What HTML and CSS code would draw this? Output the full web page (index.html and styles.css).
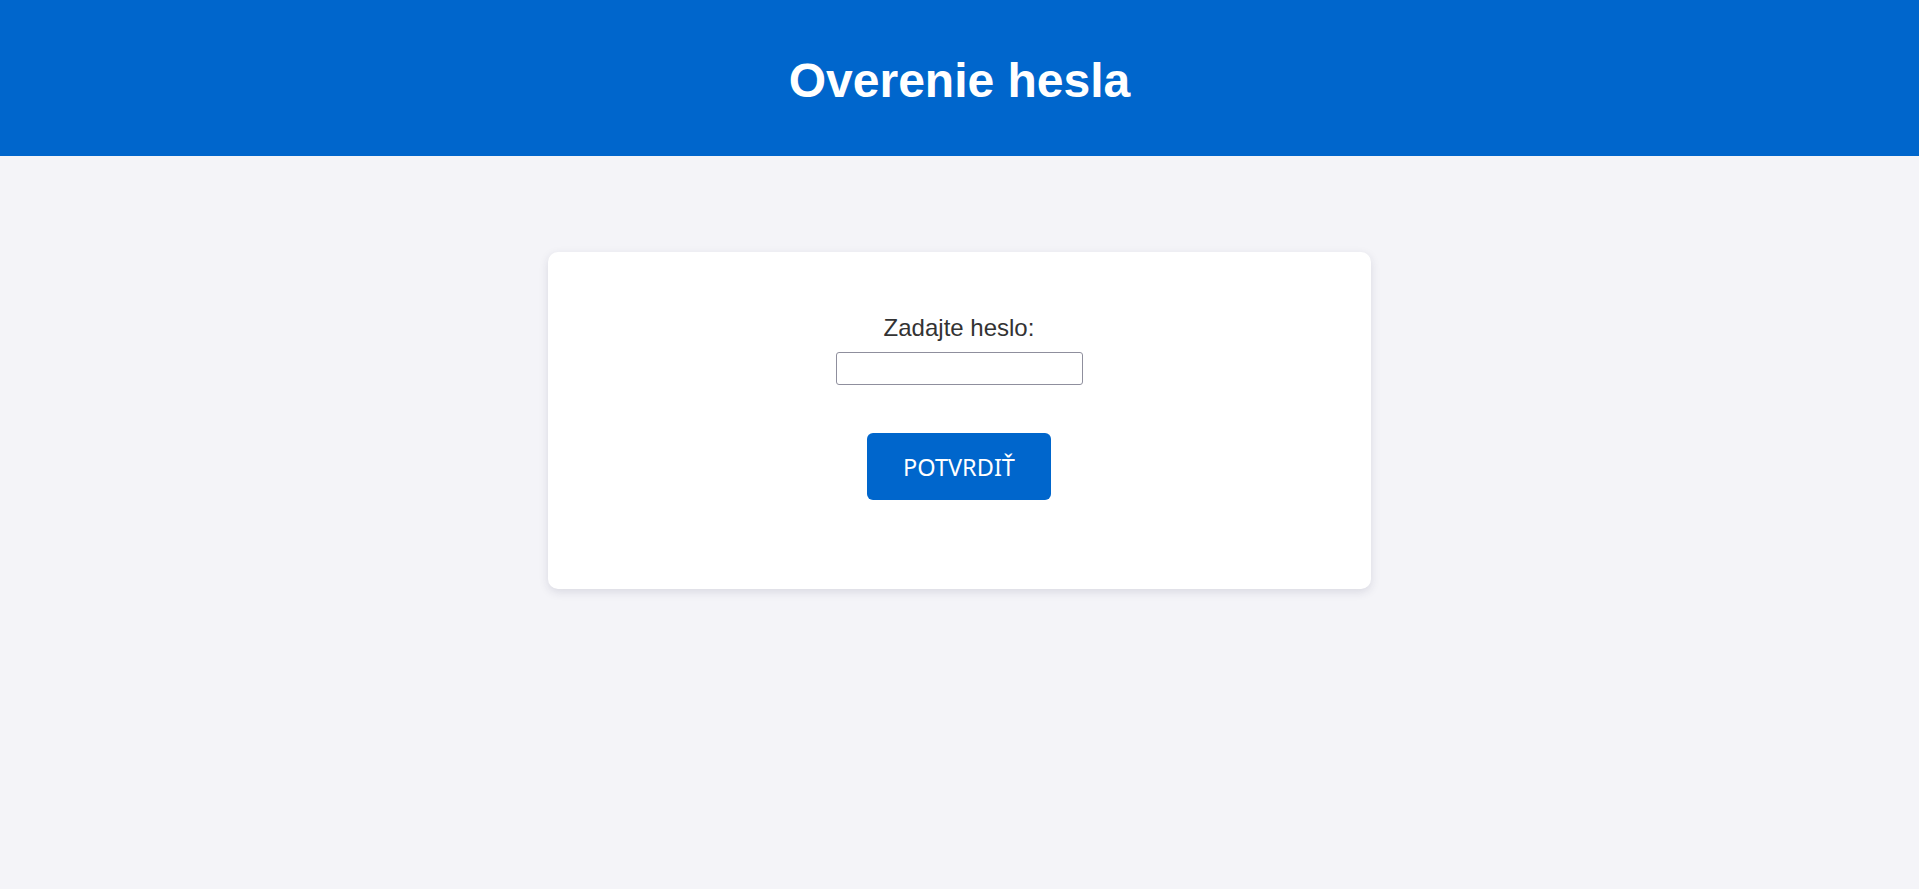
FILE: index.html
```html
<!DOCTYPE html>
<html lang="sk">
<head>
<meta charset="utf-8">
<title>Overenie hesla</title>
<link rel="stylesheet" href="styles.css">
</head>
<body>
<header class="site-header">
  <h1 class="site-title">Overenie hesla</h1>
</header>
<main class="page">
  <form class="card" onsubmit="return false;">
    <label class="field-label" for="heslo">Zadajte heslo:</label>
    <input class="field-input" type="password" id="heslo" name="heslo">
    <button class="submit-btn" type="submit">POTVRDIŤ</button>
  </form>
</main>
</body>
</html>
```
FILE: styles.css
```css
* { box-sizing: border-box; }

html, body {
  margin: 0;
  padding: 0;
}

body {
  background: #f4f4f8;
  font-family: "Liberation Sans", Arial, sans-serif;
  color: #333333;
  min-height: 889px;
}

.site-header {
  background: #0066cc;
  height: 156px;
  display: flex;
  align-items: center;
  justify-content: center;
}

.site-title {
  margin: 0;
  padding-top: 4px;
  color: #ffffff;
  font-family: "Liberation Sans", Arial, sans-serif;
  font-weight: bold;
  font-size: 48px;
  line-height: 55px;
}

.page {
  display: flex;
  justify-content: center;
  padding-top: 96px;
  padding-right: 1px;
}

.card {
  width: 823px;
  height: 337px;
  background: #ffffff;
  border-radius: 10px;
  box-shadow: 0 3px 10px rgba(40, 40, 80, 0.13);
  display: flex;
  flex-direction: column;
  align-items: center;
  padding-top: 62px;
}

.field-label {
  font-size: 24px;
  line-height: 27px;
  color: #333333;
  margin-bottom: 11px;
}

.field-input {
  width: 247px;
  height: 33px;
  border: 1px solid #8f8f9d;
  border-radius: 3px;
  padding: 4px 8px;
  font-size: 16px;
  background: #ffffff;
  margin: 0;
}

.submit-btn {
  margin-top: 48px;
  width: 184px;
  height: 67px;
  border: none;
  border-radius: 6px;
  background: #0066cc;
  color: #ffffff;
  font-family: "Noto Sans", "Open Sans", sans-serif;
  font-size: 23.5px;
  padding: 0;
  cursor: pointer;
}
```
